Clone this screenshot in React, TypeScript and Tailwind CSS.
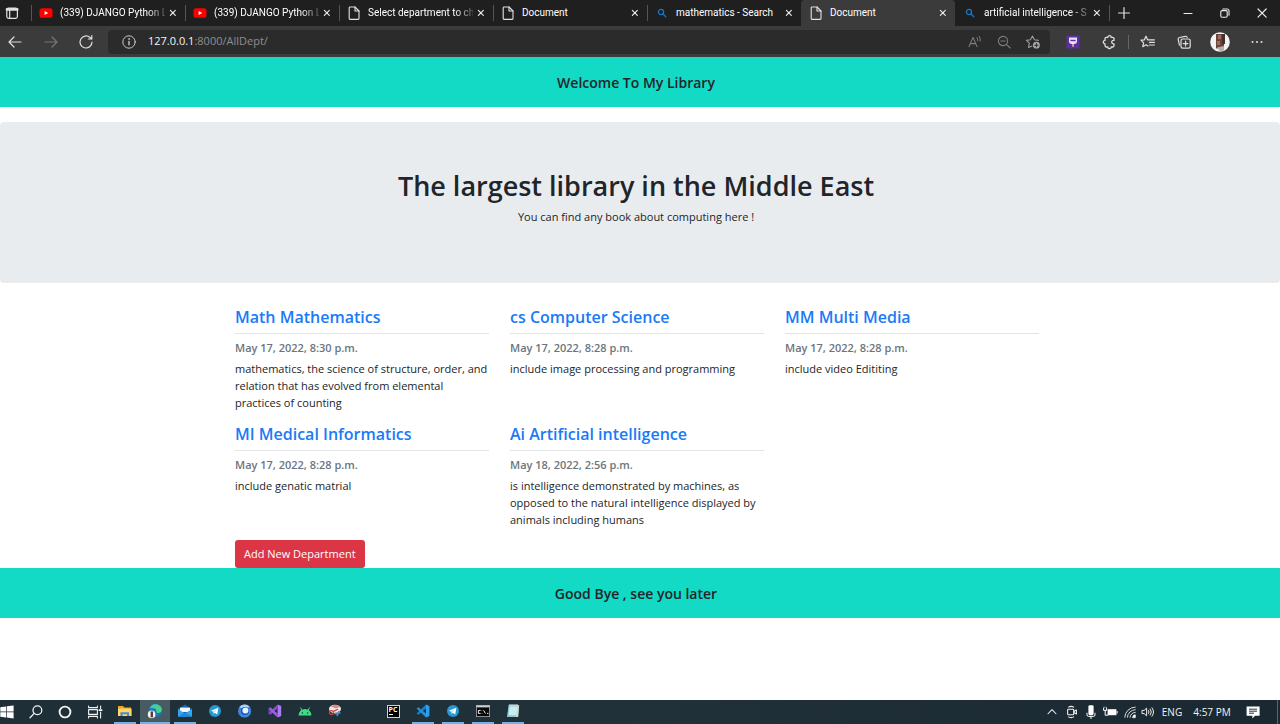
import React from "react";

type TabKind = "youtube" | "page" | "search";
type Tab = { kind: TabKind; title: string; active?: boolean; fade?: boolean };

const tabs: Tab[] = [
  { kind: "youtube", title: "(339) DJANGO Python L", fade: true },
  { kind: "youtube", title: "(339) DJANGO Python L", fade: true },
  { kind: "page", title: "Select department to ch", fade: true },
  { kind: "page", title: "Document" },
  { kind: "search", title: "mathematics - Search" },
  { kind: "page", title: "Document", active: true },
  { kind: "search", title: "artificial intelligence - S", fade: true },
];

const departments = [
  { name: "Math Mathematics", date: "May 17, 2022, 8:30 p.m.", text: "mathematics, the science of structure, order, and relation that has evolved from elemental practices of counting" },
  { name: "cs Computer Science", date: "May 17, 2022, 8:28 p.m.", text: "include image processing and programming" },
  { name: "MM Multi Media", date: "May 17, 2022, 8:28 p.m.", text: "include video Edititing" },
  { name: "MI Medical Informatics", date: "May 17, 2022, 8:28 p.m.", text: "include genatic matrial" },
  { name: "Ai Artificial intelligence", date: "May 18, 2022, 2:56 p.m.", text: "is intelligence demonstrated by machines, as opposed to the natural intelligence displayed by animals including humans" },
];

type IconProps = { children: React.ReactNode; size?: string; box?: string; w?: number };
function Line({ children, size = "size-4", box = "0 0 16 16", w = 1.1 }: IconProps) {
  return (
    <svg viewBox={box} className={`${size} shrink-0`} fill="none" stroke="currentColor" strokeWidth={w} strokeLinecap="round" strokeLinejoin="round" aria-hidden="true">
      {children}
    </svg>
  );
}
function Art({ children, size = "size-4", box = "0 0 16 16" }: IconProps) {
  return <svg viewBox={box} className={`${size} shrink-0`} aria-hidden="true">{children}</svg>;
}

function TabIcon({ kind }: { kind: TabKind }) {
  if (kind === "youtube")
    return (
      <Art>
        <rect x="1.5" y="3.2" width="13" height="9.6" rx="2.6" fill="#f00" />
        <path d="M6.6 5.9v4.2L10.2 8z" fill="#fff" />
      </Art>
    );
  if (kind === "page")
    return (
      <Line w={1.1}>
        <path d="M4 2h5l4 4v7.6a.8.8 0 0 1-.8.8H4a.8.8 0 0 1-.8-.8V2.8A.8.8 0 0 1 4 2z" />
        <path d="M9 2v4h4" />
      </Line>
    );
  return (
    <span className="text-[#1d74c4]">
      <Line w={1.3}>
        <circle cx="7" cy="7" r="2.6" />
        <path d="M9 9l2.8 2.8" />
      </Line>
    </span>
  );
}

function BrowserTab({ tab }: { tab: Tab }) {
  return (
    <div className={`flex w-[154px] min-w-0 items-center pr-1 pl-[7px] ${tab.active ? "rounded-t bg-[#3b3b3b]" : ""}`}>
      <button type="button" className="flex min-w-0 flex-1 items-center gap-[6px] text-left text-[#e2e2e2]">
        <TabIcon kind={tab.kind} />
        <span className={`min-w-0 flex-1 font-['Roboto','Open_Sans',sans-serif] text-[10px] leading-4 whitespace-nowrap text-white ${tab.fade ? "[mask-image:linear-gradient(to_right,#000_82%,transparent_105%)]" : ""}`}>
          {tab.title}
        </span>
      </button>
      <button type="button" aria-label="Close tab" className="flex size-4 items-center justify-center text-[#e8e8e8]">
        <Line w={1.6} size="size-3"><path d="M4.5 4.5l6.6 6.600M11.100 4.500L4.500 11.100" /></Line>
      </button>
    </div>
  );
}

function ToolButton({ label, className, children }: { label: string; className: string; children: React.ReactNode }) {
  return (
    <button type="button" aria-label={label} className={`flex h-7 shrink-0 items-center justify-center ${className}`}>
      {children}
    </button>
  );
}

function BrowserChrome() {
  return (
    <header className="bg-[#1f1f1f] text-[#e0e0e0]">
      <div className="flex h-[26px] items-stretch">
        <ToolButton label="Tab actions" className="w-6 self-center">
          <Line w={1.2}>
            <rect x="2.8" y="3" width="10.6" height="10.4" rx="1.8" />
            <path d="M3 4.4h10.2" strokeWidth="2.6" />
            <path d="M5.7 5v8" />
          </Line>
        </ToolButton>
        <div className="flex min-w-0 pl-[7px]">
          {tabs.map((tab, i) => (
            <div key={i} className="flex items-stretch">
              <span className={`-mr-px h-4 w-px self-center ${tab.active || tabs[i - 1]?.active ? "bg-transparent" : "bg-[#555]"}`} />
              <BrowserTab tab={tab} />
            </div>
          ))}
        </div>
        <span className="h-4 w-px self-center bg-[#555]" />
        <ToolButton label="New tab" className="w-7 self-center">
          <Line w={1.2}><path d="M8 2.5v11M2.5 8h11" /></Line>
        </ToolButton>
        <div className="ml-auto flex items-center text-[#ececec]">
          <ToolButton label="Minimize" className="w-[37px]"><Line w={1.1}><path d="M4 8.5h8" /></Line></ToolButton>
          <ToolButton label="Restore" className="w-[37px]">
            <Line w={1.1}>
              <rect x="3.8" y="5.6" width="6.4" height="6.6" rx="1.2" />
              <path d="M5.8 4h4.4a1.8 1.8 0 0 1 1.8 1.8v4.4" />
            </Line>
          </ToolButton>
          <ToolButton label="Close" className="w-[37px]"><Line w={1.2}><path d="M4 4l8.2 8.2M12.2 4L4 12.2" /></Line></ToolButton>
        </div>
      </div>
      <div className="flex h-[31px] items-center border-t-2 border-b-2 border-[#3b3b3b] bg-[#3b3b3b]">
        <ToolButton label="Back" className="w-[30px]"><Line w={1.2}><path d="M14 8H2M7 3L2 8l5 5" /></Line></ToolButton>
        <ToolButton label="Forward" className="ml-1.5 w-[30px] text-[#777]"><Line w={1.2}><path d="M2 8h12M9 3l5 5-5 5" /></Line></ToolButton>
        <ToolButton label="Refresh" className="ml-1.5 w-[28px]"><Line w={1.2}><path d="M14 8a6 6 0 1 1-2-4.5L13.7 5M13.8 1.6V5h-3.4" /></Line></ToolButton>
        <div className="ml-2 flex h-6 min-w-0 flex-1 items-center rounded bg-[#2b2b2b] pl-[13px] text-[#7d7d7d]">
          <span className="text-[#c8c8c8]">
            <Line w={1}><circle cx="8" cy="8" r="6.2" /><path d="M8 7.4v3.4" strokeWidth="1.4" /><circle cx="8" cy="5" r=".4" /></Line>
          </span>
          <label htmlFor="address" className="ml-[11px] text-[11px] text-[#f4f4f4]">127.0.0.1</label>
          <input id="address" defaultValue=":8000/AllDept/" className="min-w-0 flex-1 bg-transparent text-[11px] text-[#8e8e8e] outline-none" />
          <ToolButton label="Read aloud" className="w-[29px]">
            <Line w={1.1}><path d="M2 12.6L6 3.4l4 9.2M3.4 9.6h5.2" /><path d="M10 3.6a4 4 0 0 1 .8 3M12.2 2.200a6 6 0 0 1 1 4.800" strokeWidth="1" /></Line>
          </ToolButton>
          <ToolButton label="Zoom out" className="w-[29px]">
            <Line w={1.1}><circle cx="7" cy="7" r="4.6" /><path d="M10.4 10.4l3.8 3.6M4.8 7h4.4" /></Line>
          </ToolButton>
          <ToolButton label="Add to favorites" className="mr-[3px] w-[29px] text-[#999]">
            <Line w={1.1}>
              <path d="M7 12L3.6 13.4l.7-4.2L1.4 6.4l4-.6L7.4 2l2 3.8 4 .6" />
              <circle cx="11.4" cy="11.2" r="3.4" fill="#aaa" stroke="none" />
              <path d="M11.4 9.6v3.2M9.8 11.2H13" stroke="#2b2b2b" />
            </Line>
          </ToolButton>
        </div>
        <div className="flex items-center">
          <ToolButton label="Extension" className="ml-2 w-[30px]">
            <Art size="size-[14px]" box="0 0 14 14">
              <rect x=".5" y=".5" width="13" height="13" rx="1" fill="#5c2fa3" />
              <path d="M3 2.600h8v4a2.400 2.400 0 0 1-2.400 2.400H5.400A2.400 2.400 0 0 1 3 6.600z" fill="#e9e2f6" />
              <path d="M4.400 4.800h5.200v1.400H4.400z" fill="#5c2fa3" />
              <path d="M6 9h2v2.800H6z" fill="#d79b8a" />
            </Art>
          </ToolButton>
          <ToolButton label="Extensions" className="ml-[7px] w-[28px]">
            <Line w={1.300}>
              <path d="M5.400 3.400h1.400a1.700 1.700 0 0 1 3.400 0h1.400a1.400 1.400 0 0 1 1.400 1.400v1.600h-.6a1.700 1.700 0 0 0 0 3.400h.6v1.800a1.400 1.400 0 0 1-1.400 1.400h-1.400a1.700 1.700 0 0 1-3.400 0H5.400A1.400 1.400 0 0 1 4 11.600V9.800a1.700 1.700 0 0 1 0-3.400V4.800a1.400 1.400 0 0 1 1.400-1.400z" />
            </Line>
          </ToolButton>
          <span className="mx-[5px] h-[14px] w-px bg-[#666]" />
          <ToolButton label="Favorites" className="w-[28px]">
            <Line w={1.2}><path d="M8.800 5.800H7.600L6 2.200 4.400 5.800l-3.400.4 2.600 2.600-.8 3.900 3.200-1.900 2 1.200M9.400 5.800h5M9.400 8.400h5M9.400 11h5" /></Line>
          </ToolButton>
          <ToolButton label="Collections" className="ml-2 w-[28px]">
            <Line w={1.2}><rect x="5" y="5" width="9.2" height="9.2" rx="1.6" /><path d="M9.6 7.2v4.8M7.2 9.6H12M3.4 11.2L2.2 5.4a1.6 1.6 0 0 1 1.2-1.9l6-1.2a1.6 1.6 0 0 1 1.8 1.1" /></Line>
          </ToolButton>
          <ToolButton label="Profile" className="ml-2 w-[28px]">
            <Art size="size-5" box="0 0 20 20">
              <circle cx="10" cy="10" r="9.8" fill="#f4f4f4" />
              <path d="M6 2h8v14.400H6z" fill="#6b453c" />
              <path d="M8 3h3v4H8zM7 9h3v4H7z" fill="#a06c5d" />
              <path d="M12 2h3v10h-3z" fill="#43312f" />
              <path d="M7 15.400l7-1.400v4.400l-4 1.200z" fill="#b5b1ac" />
            </Art>
          </ToolButton>
          <ToolButton label="Settings and more" className="mr-2 ml-2 w-[30px]">
            <Art><g fill="#e0e0e0"><circle cx="3.5" cy="8" r="1" /><circle cx="8" cy="8" r="1" /><circle cx="12.5" cy="8" r="1" /></g></Art>
          </ToolButton>
        </div>
      </div>
    </header>
  );
}

function Telegram() {
  return (
    <Art size="size-[14px]" box="0 0 14 14">
      <circle cx="7" cy="7" r="6" fill="#2499d6" />
      <path d="M2.8 6.8l7.6-3-1.2 6.8-2.4-1.8-1 1.2-.4-2.2z" fill="#fff" />
      <path d="M5.4 7.8l3.4-2.6-2.4 3.2-.6 1.6z" fill="#b9d9ea" />
    </Art>
  );
}

type TaskEntry = { label: string; open?: boolean; active?: boolean; icon: React.ReactNode };

const pinned: TaskEntry[] = [
  { label: "File Explorer", open: true, icon: <Art><path d="M1 3h5l1.4 1.4H14V13H1z" fill="#e6a72b" /><path d="M1 5.6h13.6V13H1z" fill="#ffd666" /><path d="M3.4 13V9.2h8.8V13H10v-1.8H5.6V13z" fill="#3f8ed6" /></Art> },
  { label: "Microsoft Edge", open: true, active: true, icon: <Art><circle cx="8.6" cy="7.400" r="6.400" fill="#1779c9" /><path d="M2.600 5.400C4.600 1 9.600-.2 13.200 3c3 3 1.600 7-1.600 7-2.600 0-2.400-1.400-2.200-2.400C9.400 5 5.400 4.400 2.600 5.400z" fill="#48cf8a" /><path d="M2.600 5.400C4.600 1 8.600.4 11 1.600 7 1.600 5 3 2.600 5.400z" fill="#35b8d8" /><circle cx="4.600" cy="11.400" r="3.800" fill="#f3f3f3" /><path d="M3.600 8.400h2.400v6H3.600z" fill="#5b3b34" /></Art> },
  { label: "Mail", open: true, icon: <Art><path d="M1 6l7-4.600L15 6v7.400H1z" fill="#1467b3" /><path d="M3 4.600h10V9H3z" fill="#f2f8ff" /><path d="M1 6l7 4.400L15 6v7.400H1z" fill="#35a6ee" /><path d="M1 13.400l7-4 7 4z" fill="#1e8ad8" /></Art> },
  { label: "Telegram", icon: <Telegram /> },
  { label: "Browser", icon: <Art><circle cx="7.600" cy="8" r="6.600" fill="#3f86e0" /><path d="M2.200 4.200a6.600 6.600 0 0 1 10.400-.4L7.600 6z" fill="#a9d3f8" /><circle cx="8" cy="8" r="4" fill="#1c55ad" /><circle cx="8.400" cy="7.400" r="3" fill="#eaf4ff" /></Art> },
  { label: "Visual Studio", icon: <Art><path d="M10.600 1.400L14.200 3v10l-3.600 1.600z" fill="#b179f1" /><path d="M10.600 1.400v3.800L3.400 11.800 1.600 10.800V10L10.600 1.400z" fill="#8a4fd0" /><path d="M10.600 14.600v-3.800L3.400 4.200 1.600 5.200V6z" fill="#9c5fe0" /><path d="M1.600 5.200h1.200v5.600H1.600z" fill="#7a42c0" /></Art> },
  { label: "Android", icon: <Art><path d="M1.600 12.400a6.400 6.400 0 0 1 12.800 0z" fill="#3ddc84" /><path d="M3.400 4.600L5.400 8M12.600 4.600L10.600 8" stroke="#3ddc84" /><circle cx="5.400" cy="10" r=".7" fill="#203037" /><circle cx="10.600" cy="10" r=".7" fill="#203037" /></Art> },
  { label: "Snipping Tool", icon: <Art><ellipse cx="8" cy="6" rx="6" ry="4.200" fill="#f1e4e2" /><path d="M4 3.400c3-2.200 7-1.600 9 .4L9 5.600z" fill="#e08a84" /><circle cx="4.400" cy="9.600" r="2" fill="none" stroke="#c8433c" strokeWidth="1.200" /><path d="M6 8.600l5-2.400" stroke="#c8433c" strokeWidth="1.200" /><path d="M7.600 10.600l5.800-1M10 13l2-5" stroke="#4d92c8" strokeWidth="1.600" /></Art> },
];

const running: TaskEntry[] = [
  { label: "PyCharm", icon: <span className="flex size-[13px] flex-col items-start gap-px border border-[#e3e34a] bg-black px-px text-[7px] leading-[7px] font-bold text-white">PC<span className="h-px w-1 bg-white" /></span> },
  { label: "Visual Studio Code", open: true, icon: <Art><path d="M11 1.4l3.4 1.6v10L11 14.600z" fill="#2ba0ee" /><path d="M11 1.400v4L3.400 11.800 1.600 10.400z" fill="#1680cc" /><path d="M11 14.600v-4L3.400 4.200 1.600 5.600z" fill="#2093df" /></Art> },
  { label: "Telegram Desktop", open: true, icon: <Telegram /> },
  { label: "Command Prompt", open: true, icon: <Art><rect x="1.4" y="2.4" width="13.2" height="11.2" fill="#080808" stroke="#aaa" strokeWidth=".8" /><path d="M1.4 2.4h13.2v2H1.4z" fill="#ccc" /><path d="M5.6 7.4H3.4v3h2.2M7 7.6v.4M7 10v.4M8.6 7.4l1.8 3M12 10.4h1.4" stroke="#eee" fill="none" /></Art> },
  { label: "Notepad", open: true, icon: <Art><path d="M3.6 2h10.6l-1 12H2z" fill="#8ec9cf" /><path d="M4.6 3.4h7.8l-.8 8.8H3.6z" fill="#c9edf0" /><path d="M12.6 3h1.4l-1 11H11z" fill="#dad9c7" /><path d="M4 2h9" stroke="#e8e8e8" /></Art> },
];

function TaskItem({ item }: { item: TaskEntry }) {
  return (
    <button type="button" aria-label={item.label} className={`flex h-6 w-[30px] flex-col items-center ${item.active ? "bg-[#485b63]" : ""}`}>
      <span className="flex flex-1 items-center">{item.icon}</span>
      <span className={`h-0.5 ${item.active ? "w-full" : "w-[22px]"} ${item.open ? "bg-[#6fb3e8]" : "bg-transparent"}`} />
    </button>
  );
}

function Taskbar() {
  return (
    <footer className="flex h-6 items-center bg-linear-to-r from-[#1f2f38] via-[#213139] to-[#1a2931] text-[#f2f2f2]">
      <ToolButton label="Start" className="w-[22px] justify-start pr-2"><Art size="size-[14px]" box="0 0 14 14"><path d="M.3 2.2L6 1.4v5.200H.3zM6.700 1.300L13.600.400v6.200H6.700zM.3 7.300H6v5.200l-5.700-.8zM6.700 7.300h6.900v6.300l-6.900-1z" fill="#fff" /></Art></ToolButton>
      <ToolButton label="Search" className="w-7"><Line w={1.3}><circle cx="9.4" cy="6.2" r="4.400" /><path d="M6.200 9.400L2 13.800" /></Line></ToolButton>
      <ToolButton label="Cortana" className="w-[30px]"><Line w={1.9}><circle cx="8" cy="8" r="5.400" /></Line></ToolButton>
      <ToolButton label="Task view" className="w-[30px]"><Line w={1.1}><path d="M1.6 2v1.6h8.8V2M1.600 14v-1.600h8.800V14M1.600 5.600h8.800v4.800H1.600zM13.600 2v2.400M13.600 8v6" /><path d="M12.400 6.200h2.200" strokeWidth="1.8" /></Line></ToolButton>
      {pinned.map((item) => <TaskItem key={item.label} item={item} />)}
      <span className="w-7" />
      {running.map((item) => <TaskItem key={item.label} item={item} />)}
      <div className="ml-auto flex h-full items-center text-[10px]">
        <ToolButton label="Show hidden icons" className="w-5"><Line w={1.2} size="size-[14px]"><path d="M3.400 10L8 5.400l4.600 4.600" /></Line></ToolButton>
        <ToolButton label="Camera" className="w-[19px]"><Line w={1.2} size="size-[14px]"><rect x="3" y="4.800" width="7" height="6.400" rx="1" /><path d="M10 7.400l3-1.600v4.400l-3-1.600M4 2.400Q7 .8 10 2.400M4 13.600Q7 15.200 10 13.600" /></Line></ToolButton>
        <ToolButton label="Microphone" className="w-[19px]"><Art><rect x="5.400" y="1.200" width="5.200" height="10" rx="1.400" fill="#fff" /><path d="M4 8.800v2a1.600 1.600 0 0 0 1.600 1.600h4.800a1.600 1.600 0 0 0 1.600-1.600v-2M8 12.400V15" stroke="#fff" fill="none" /></Art></ToolButton>
        <ToolButton label="Battery" className="w-5"><Art><path d="M5.600 5.200h8.800v6H5.600z" fill="#fff" /><path d="M14.600 7h1v2.400h-1z" fill="#fff" /><path d="M1.600 4v2.400h3V4M3.200 6.400v4.800h3M2 2.800v1M4.200 2.800v1" stroke="#fff" fill="none" /></Art></ToolButton>
        <ToolButton label="Network" className="w-[19px]"><Line w={1} size="size-[14px]"><path d="M2 14A12 12 0 0 1 14 2.400" /><path d="M5 14A9 9 0 0 1 14 5.400" /><path d="M8 14a6 6 0 0 1 6-5.600" /><path d="M11 14a3 3 0 0 1 3-2.800V14z" fill="currentColor" /></Line></ToolButton>
        <ToolButton label="Volume" className="w-[18px]"><Line w={1.100} size="size-[14px]"><path d="M1.600 6.200h2L6.400 3.600v8.800L3.600 9.800h-2zM8.600 6.200a3 3 0 0 1 0 3.600M10.600 4.600a5.400 5.400 0 0 1 0 6.800M12.600 3.200a8 8 0 0 1 0 9.600" /></Line></ToolButton>
        <button type="button" className="w-[30px] text-center">ENG</button>
        <button type="button" className="w-[50px] text-center">4:57 PM</button>
        <ToolButton label="Notifications" className="w-8"><Art><path d="M1.600 2.400h13v9.400H10l-2.600 2.600v-2.600H1.600z" fill="#fff" /><path d="M4 5.200h8M4 7.200h8M4 9.200h5" stroke="#26353c" /></Art></ToolButton>
        <span className="mr-[2px] ml-2 h-full w-px bg-[#5b686e]" />
      </div>
    </footer>
  );
}

export default function App() {
  return (
    <div className="flex min-h-screen flex-col bg-white font-['Open_Sans','Noto_Sans',sans-serif] text-[#212529]">
      <BrowserChrome />
      <main className="flex-1">
        <div className="flex h-[50px] items-center justify-center bg-[#12dac4] pt-0.5 pr-2 text-sm font-semibold">Welcome To My Library</div>
        <section className="mt-[15px] h-[161px] rounded bg-[#e9ecef] pt-[46px] pr-2 text-center">
          <h1 className="text-[27px] leading-9 font-semibold">The largest library in the Middle East</h1>
          <p className="mt-1 text-[11px] leading-[17px]">You can find any book about computing here !</p>
        </section>
        <section className="mt-[23px] pr-[6px]">
          <div className="mx-auto max-w-[804px]">
            <div className="grid grid-cols-3 gap-x-[21px]">
              {departments.map((d) => (
                <article key={d.name} className="pb-3">
                  <h2 className="mb-[5px] border-b border-[#e2e4e6] pb-[5px] text-base leading-[22px] font-semibold">
                    <a href="#" className="text-[#1a7af8]">{d.name}</a>
                  </h2>
                  <p className="mb-1 text-[11px] leading-[17px] font-semibold text-[#6c757d]">{d.date}</p>
                  <p className="min-h-[51px] text-[11px] leading-[17px]">{d.text}</p>
                </article>
              ))}
            </div>
            <button type="button" className="block h-7 rounded-[3px] bg-[#dc3545] px-[9px] text-[11px] text-white">Add New Department</button>
          </div>
        </section>
        <div className="flex h-[50px] items-center justify-center bg-[#12dac4] pt-0.5 pr-2 text-sm font-semibold">Good Bye , see you later</div>
      </main>
      <Taskbar />
    </div>
  );
}
